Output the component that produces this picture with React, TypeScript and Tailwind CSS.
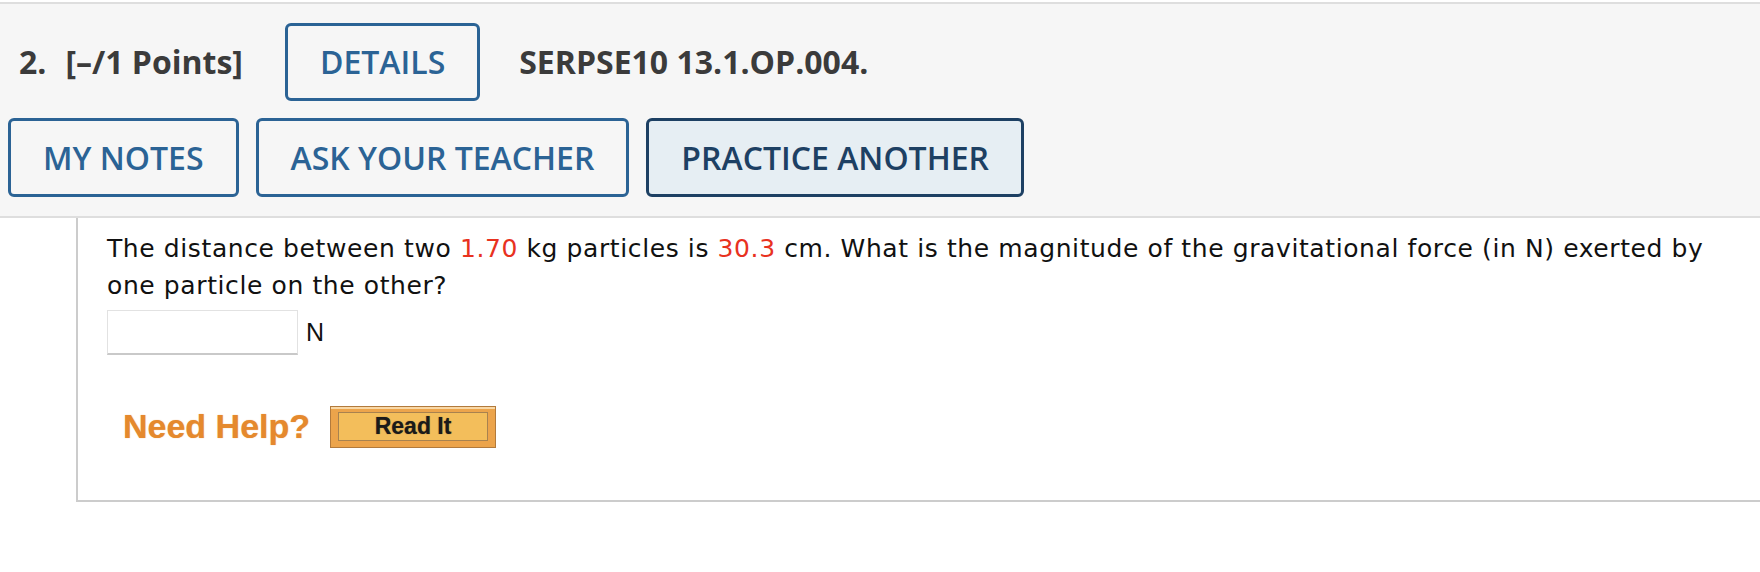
const OutlineButton = ({ label, dark = false }: { label: string; dark?: boolean }) => {
  return (
    <button
      className={
        dark
          ? "h-[79px] px-[32px] flex items-center border-[3px] border-[#1d4063] rounded-[6px] bg-[#e6eef3] text-[#1d4063] text-[32px] font-semibold"
          : "h-[79px] px-[32px] flex items-center border-[3px] border-[#2b6395] rounded-[6px] bg-[#f6f6f6] text-[#2b6395] text-[32px] font-semibold"
      }
    >
      {label}
    </button>
  );
};

const App = () => {
  return (
    <div className="w-[1760px] h-[572px] bg-white pt-[2px] overflow-hidden">
      <header className="bg-[#f6f6f6] border-y-2 border-[#dedede] pt-[19px] pb-[19px] font-['Open_Sans',sans-serif]">
        <div className="flex items-center pl-[19px]">
          <span className="text-[32px] font-bold text-[#3b3b3b]">2.</span>
          <span className="ml-[19px] text-[32px] font-bold text-[#3b3b3b]">[–/1 Points]</span>
          <div className="ml-[42px]">
            <button className="h-[78px] px-[32px] flex items-center border-[3px] border-[#2b6395] rounded-[6px] bg-[#f6f6f6] text-[#2b6395] text-[32px] font-semibold">
              DETAILS
            </button>
          </div>
          <span className="ml-[39px] text-[32px] font-bold text-[#3b3b3b]">SERPSE10 13.1.OP.004.</span>
        </div>
        <div className="flex gap-[17px] pl-[8px] mt-[17px]">
          <OutlineButton label="MY NOTES" />
          <OutlineButton label="ASK YOUR TEACHER" />
          <OutlineButton label="PRACTICE ANOTHER" dark />
        </div>
      </header>

      <section className="ml-[76px] border-l-2 border-b-2 border-[#cccccc] pl-[29px] pt-[12px] pb-[48px]">
        <p className="font-['DejaVu_Sans',Verdana,sans-serif] text-[25px] leading-[37px] text-[#111] tracking-[0.6px]">
          The distance between two <span className="text-[#e8321f]">1.70</span> kg particles is{" "}
          <span className="text-[#e8321f]">30.3</span> cm. What is the magnitude of the gravitational force (in N) exerted by
          <br />
          one particle on the other?
        </p>
        <div className="flex items-center gap-[8px] mt-[6px]">
          <input
            type="text"
            className="w-[191px] h-[45px] bg-white border border-[#e2e2e2] border-b-2 border-b-[#c9c9c9] outline-none"
          />
          <span className="font-['Liberation_Sans',Arial,sans-serif] text-[25px] text-[#111]">N</span>
        </div>
        <div className="flex items-center mt-[46px] ml-[16px]">
          <span className="font-['Liberation_Sans',Arial,sans-serif] font-bold text-[34px] text-[#e5892d] [text-shadow:0_0_1px_rgba(229,137,45,0.7)]">
            Need Help?
          </span>
          <button className="ml-[20px] w-[166px] h-[42px] border border-[#b27a3c] bg-[#eca44b] shadow-[inset_0_2px_0_#f9d8a6] px-[7px] pt-[5px] pb-[6px] flex">
            <span className="flex-1 flex items-center justify-center border border-[#a8824f] bg-[#f3be5b] font-['Liberation_Sans',Arial,sans-serif] font-bold text-[23px] text-[#1a1a1a] [text-shadow:0_0_1px_rgba(0,0,0,0.5)]">
              Read It
            </span>
          </button>
        </div>
      </section>
    </div>
  );
};

export default App;
